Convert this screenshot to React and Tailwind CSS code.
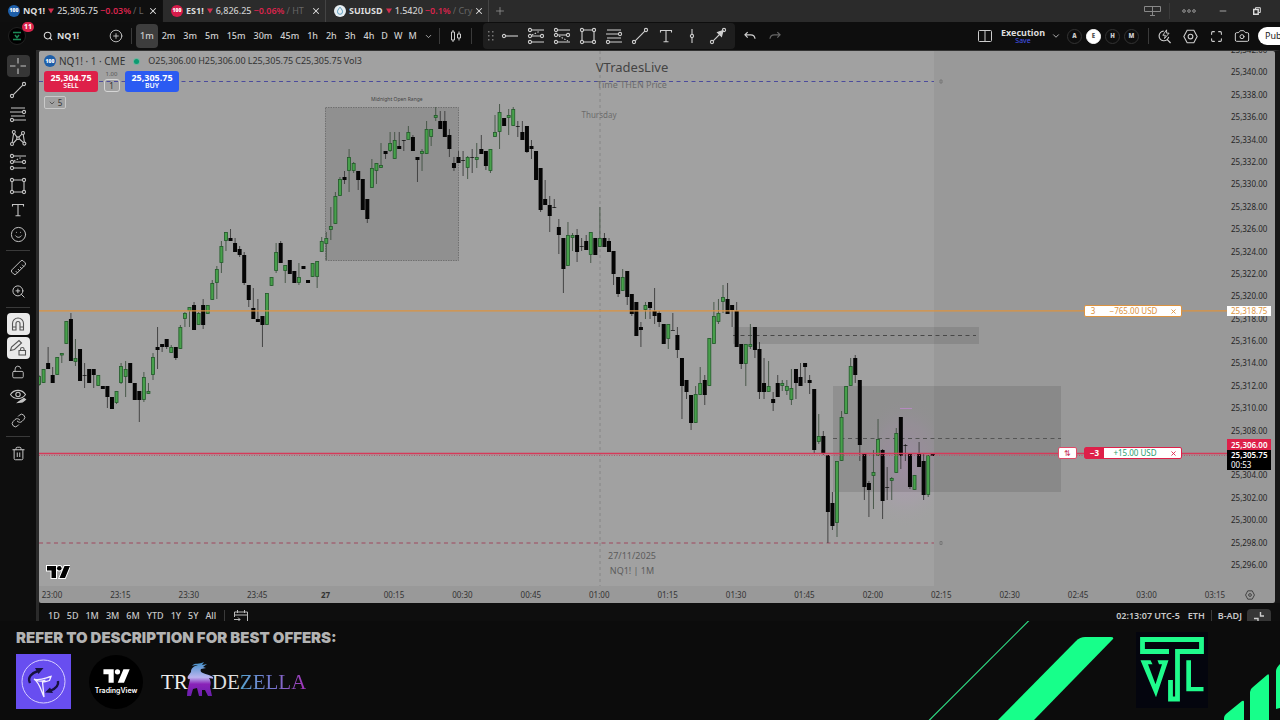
import React from "react";
import { Search, CirclePlus, Plus, X, ChevronDown, Camera, Smile, Ruler, ZoomIn, LockOpen, Link, Trash2, Maximize, Minus } from "lucide-react";

/* One entry per minute: [high, body top, body bottom, low, 1 = up / 0 = down] */
const CANDLES = [
  [375,376,385,386,1],[369,369,383,383,1],[347,363,369,369,0],[367,375,383,383,0],[357,357,375,375,1],[353,353,355,363,1],
  [321,321,344,344,1],[313,319,361,361,0],[339,358,362,366,1],[349,349,381,381,0],[363,375,375,388,0],[369,369,383,383,0],
  [369,369,375,388,0],[375,375,386,386,1],[386,386,389,389,0],[386,386,397,408,0],[397,397,409,409,0],[391,391,403,404,1],
  [363,366,383,384,1],[361,369,377,397,1],[363,363,383,383,0],[383,383,400,400,0],[391,391,400,422,0],[372,377,400,402,1],
  [383,391,394,394,1],[353,357,375,380,1],[327,347,350,369,0],[344,344,347,352,0],[339,339,347,349,0],[345,347,353,353,1],
  [347,347,358,360,0],[325,327,349,349,1],[312,313,319,327,1],[307,307,311,327,1],[302,305,330,330,0],[312,313,325,325,1],
  [299,305,325,329,0],[305,305,314,314,1],[280,283,300,300,1],[266,269,283,299,1],[241,246,263,273,1],[232,232,241,251,1],
  [229,238,241,241,0],[238,243,252,252,0],[246,249,255,257,0],[252,255,283,285,0],[285,285,300,307,0],[288,308,319,319,0],
  [299,319,322,322,0],[316,316,325,347,0],[293,293,325,325,1],[277,277,286,286,1],[243,252,271,273,1],[241,243,263,263,0],
  [265,265,271,283,1],[260,260,274,274,0],[271,271,283,283,0],[263,277,283,285,1],[266,266,269,269,0],[280,280,283,283,0],
  [263,263,277,277,1],[261,261,277,288,1],[237,241,252,252,1],[232,238,244,260,1],[207,226,230,240,1],[192,196,224,224,1],
  [177,179,196,196,1],[171,177,180,184,0],[149,157,171,192,1],[162,163,171,173,1],[171,171,180,190,0],[179,179,210,210,0],
  [199,199,219,223,0],[159,168,188,188,1],[163,163,171,184,1],[143,165,168,168,1],[151,151,154,159,0],[132,143,151,152,1],
  [132,140,159,159,1],[132,146,149,149,0],[140,140,140,151,0],[126,132,140,140,1],[135,137,151,151,0],[157,157,160,182,0],
  [149,151,154,171,1],[121,129,154,154,1],[129,129,137,146,1],[107,115,118,121,1],[111,121,129,129,0],[111,121,137,137,0],
  [129,135,149,157,0],[157,163,168,171,0],[151,157,163,163,0],[151,160,160,176,0],[156,157,168,179,1],[149,157,157,173,0],
  [143,157,160,168,1],[135,149,154,154,0],[151,151,166,170,0],[149,149,171,173,1],[115,132,137,137,1],[104,112,132,149,1],
  [118,118,126,126,0],[109,115,118,135,1],[107,109,126,126,1],[121,126,126,137,0],[121,132,140,140,0],[126,126,152,153,0],
  [140,146,149,159,0],[151,151,180,180,0],[168,168,210,212,0],[180,199,205,205,0],[196,205,216,232,0],[199,207,207,208,0],
  [219,227,235,254,0],[238,238,269,293,0],[222,235,266,266,1],[233,235,238,251,1],[229,235,252,262,0],[238,246,246,251,0],
  [235,241,250,250,0],[232,232,255,263,1],[238,238,255,255,0],[207,238,247,247,1],[233,238,247,247,0],[238,241,252,252,0],
  [251,251,274,285,0],[277,277,294,297,0],[269,277,291,291,1],[271,271,297,305,0],[294,294,314,316,0],[302,302,336,336,0],
  [322,327,330,347,0],[302,305,310,319,1],[302,302,308,319,0],[288,311,316,324,0],[311,313,322,327,0],[324,324,344,344,0],
  [324,324,339,349,1],[313,330,330,330,0],[327,335,350,358,0],[358,358,386,419,0],[380,380,392,399,0],[395,395,423,430,0],
  [386,394,423,423,1],[367,383,395,395,1],[375,380,395,405,0],[338,338,386,386,1],[302,316,344,344,1],[299,313,322,324,1],
  [285,297,302,313,1],[283,299,314,314,0],[305,305,310,327,0],[302,311,347,347,0],[344,344,364,369,0],[344,344,364,386,1],
  [324,344,347,349,1],[327,327,350,358,0],[342,349,392,399,0],[358,383,392,399,0],[361,386,392,392,1],[392,399,403,411,0],
  [375,383,397,397,0],[380,383,386,391,1],[380,386,391,395,1],[369,388,400,405,1],[369,369,383,399,0],[363,377,386,386,0],
  [363,363,367,383,0],[375,380,383,394,0],[389,389,450,453,0],[414,436,442,444,1],[431,436,453,455,0],[455,455,512,543,0],
  [492,503,526,530,0],[461,461,523,537,1],[411,417,461,461,1],[386,386,414,414,1],[358,366,386,386,1],[355,358,375,383,0],
  [380,380,445,461,0],[453,453,487,500,0],[481,483,490,517,0],[450,472,476,509,1],[419,439,456,456,1],[449,450,501,519,0],
  [467,487,487,500,0],[477,478,481,500,1],[428,433,473,473,1],[417,417,456,469,0],[444,445,445,461,0],[453,453,487,489,0],
  [475,475,490,490,1],[442,453,467,467,0],[453,461,495,500,0],[455,455,495,497,1],[453,453,456,456,0],
];

const PRICES = Array.from({ length: 24 }, (_, i) => 342 - i * 2);
const TIMES = ["23:00","23:15","23:30","23:45","27","00:15","00:30","00:45","01:00","01:15","01:30","01:45","02:00","02:15","02:30","02:45","03:00","03:15"];
const INTERVALS = ["1m","2m","3m","5m","15m","30m","45m","1h","2h","3h","4h","D","W","M"];
const RANGES = ["1D","5D","1M","3M","6M","YTD","1Y","5Y","All"];

function Glyph({ children, className = "size-[18px]" }) {
  return (
    <svg viewBox="0 0 18 18" fill="none" stroke="currentColor" strokeWidth="1.1" className={className} aria-hidden="true">
      {children}
    </svg>
  );
}

const TrendIcon = () => (
  <Glyph><path d="M4.2 13.8 13.8 4.2" /><circle cx="3" cy="15" r="1.6" /><circle cx="15" cy="3" r="1.6" /></Glyph>
);
const FibIcon = () => (
  <Glyph><path d="M2 3h14M1 7h12.4M2 11h14M4.6 15H17" /><circle cx="15" cy="7" r="1.6" /><circle cx="3" cy="15" r="1.6" /></Glyph>
);
const PatternIcon = () => (
  <Glyph>
    <path d="M3.2 13.4 4.6 4.6M5.2 4.4l3 4M9.8 8.2l3.2-3M14.2 5.4l1.2 7.8M4.4 14 8 10.2M14.4 13.6l-4-3.6" />
    <circle cx="3" cy="15" r="1.5" /><circle cx="4.8" cy="3" r="1.5" /><circle cx="9" cy="9.2" r="1.3" /><circle cx="14" cy="4" r="1.5" /><circle cx="15.4" cy="14.6" r="1.5" />
  </Glyph>
);
const LongIcon = () => (
  <Glyph>
    <path d="M4.6 3H17M4.6 9h8.8M4.6 15H17" /><path d="m5 8 8-4" strokeDasharray="1.5 1.5" />
    <circle cx="3" cy="3" r="1.6" /><circle cx="3" cy="9" r="1.6" /><circle cx="15" cy="9" r="1.6" /><circle cx="3" cy="15" r="1.6" />
  </Glyph>
);
const ShortIcon = () => (
  <Glyph>
    <path d="M4.6 3H17M4.6 8h8.8M4.6 15H17" /><path d="m6 9 9 5" strokeDasharray="1.5 1.5" />
    <circle cx="3" cy="3" r="1.6" /><circle cx="3" cy="8" r="1.6" /><circle cx="15" cy="8" r="1.6" /><circle cx="3" cy="15" r="1.6" />
  </Glyph>
);
const RectIcon = () => (
  <Glyph>
    <path d="M4.6 3h8.8M4.6 15h8.8M3 4.6v8.8M15 4.6v8.8" />
    <circle cx="3" cy="3" r="1.6" /><circle cx="15" cy="3" r="1.6" /><circle cx="3" cy="15" r="1.6" /><circle cx="15" cy="15" r="1.6" />
  </Glyph>
);
const TextIcon = () => <Glyph><path d="M3.5 5.5V3.5h11v2M9 3.5v11M6.5 14.8h5" /></Glyph>;
const HLineIcon = () => <Glyph><circle cx="3" cy="9" r="1.6" /><path d="M4.6 9H17" /></Glyph>;
const VLineIcon = () => <Glyph><circle cx="9" cy="9" r="1.6" /><path d="M9 2v5.4M9 10.6V16" /></Glyph>;
const ArrowToolIcon = () => (
  <Glyph><path d="M4.2 13.8 14 4" /><path d="m14 3.5-5.5 2 4 4z" fill="currentColor" /><circle cx="3" cy="15" r="1.6" /><circle cx="15" cy="3" r="1.6" /></Glyph>
);
const CrossIcon = () => <Glyph><path d="M9 1v5.5M9 11.5V17M1 9h5.5M11.5 9H17" /></Glyph>;
const MagnetIcon = () => (
  <Glyph><path d="M3.5 15V8.5a5.5 5.5 0 0 1 11 0V15H11V8.5a2 2 0 0 0-4 0V15zM3.5 12H7M11 12h3.5" /></Glyph>
);
const PencilLockIcon = () => (
  <Glyph><path d="m1.5 11.5 1-3.5L10 1.500 12.500 4 5.500 10.500zM10 14.500v-3h6.500v4.500H10zM11.500 11.500v-1.200a1.800 1.800 0 0 1 3.600 0v1.200" /></Glyph>
);
const EyeIcon = () => (
  <Glyph><path d="M1.5 7.5C5 2 13 2 16.5 7.5 15 10 12.5 11.5 9 11.500S3 10 1.500 7.500z" /><circle cx="9" cy="7.5" r="2.2" /><path d="m9 15.5 2-1.5 4-2.5 1.500 1-3 2.500z" fill="currentColor" /></Glyph>
);

function Symbol100({ tone }) {
  return (
    <span className={`flex size-3 shrink-0 items-center justify-center rounded-full text-[5px] font-black text-white ${tone}`}>100</span>
  );
}

function Tab({ icon, name, price, change, tail, active }) {
  return (
    <div className={`flex w-[163px] shrink-0 items-center border-r pr-1 pl-2 ${active ? "border-[#111] bg-[#0f0f0f]" : "border-[#444]"}`}>
      {icon}
      <span className="ml-[3px] font-bold text-[#ddd]">{name}</span>
      <svg viewBox="0 0 6 6" className="mx-[3px] size-[6px] shrink-0 fill-[#d32f4f]" aria-hidden="true"><path d="M0 .5h6L3 5.5z" /></svg>
      <span className="font-medium text-[#ccc]">{price}</span>
      <span className="ml-[2px] font-semibold text-[#d8244c]">{change}</span>
      <span className="ml-[2px] flex-1 overflow-hidden whitespace-nowrap text-[#666]">{tail}</span>
      <button aria-label={`Close ${name}`} className="text-[#e0e0e0]"><X size={10} strokeWidth={2.5} /></button>
    </div>
  );
}

const Divider = ({ className = "" }) => <span className={`w-px shrink-0 bg-[#3a3a3a] ${className}`} />;

function TopTabs() {
  return (
    <header className="flex h-[22px] shrink-0 items-stretch bg-[#2b2b2b] text-[9px]">
      <Tab active icon={<Symbol100 tone="bg-[#1d5ea8]" />} name="NQ1!" price="25,305.75" change="−0.03%" tail="/ L" />
      <Tab icon={<Symbol100 tone="bg-[#d81b4a]" />} name="ES1!" price="6,826.25" change="−0.06%" tail="/ HT" />
      <Tab
        icon={
          <svg viewBox="0 0 12 12" className="size-3 shrink-0" aria-hidden="true">
            <circle cx="6" cy="6" r="6" fill="#e6eef2" /><path d="M6 2.2c2 2.5 2.5 3.3 2.5 4.6a2.500 2.500 0 0 1-5 0C3.500 5.500 4 4.700 6 2.200z" fill="none" stroke="#5f9fc0" strokeWidth="1" />
          </svg>
        }
        name="SUIUSD" price="1.5420" change="−0.1%" tail="/ Cry"
      />
      <button aria-label="New tab" className="px-[5px] text-[#999]"><Plus size={12} strokeWidth={1.5} /></button>
      <div className="ml-auto flex items-center text-[#bbb]">
        <button aria-label="Tab layout">
          <svg viewBox="0 0 17 12" className="h-3 w-[17px] fill-none stroke-[#888]" aria-hidden="true"><path d="M.5 1.5h16v5H.5zM8.500 1.500V10M6 10.500h5" /></svg>
        </button>
        <Divider className="mr-[9px] ml-2 h-4" />
        <button aria-label="More" className="px-[3px]">
          <svg viewBox="0 0 14 4" className="h-1 w-[14px] fill-none stroke-[#999]" aria-hidden="true"><circle cx="2" cy="2" r="1.3" /><circle cx="7" cy="2" r="1.3" /><circle cx="12" cy="2" r="1.3" /></svg>
        </button>
        <button aria-label="Minimize" className="ml-[15px] px-1"><Minus size={10} /></button>
        <button aria-label="Restore" className="mr-[19px] ml-[21px]">
          <svg viewBox="0 0 8 8" className="size-2 fill-none stroke-[#ddd]" aria-hidden="true"><path d="M.7 2.5h4.500v4.800H.7z" strokeWidth="1.4" /><path d="M2.500 2V.7h4.800v4.800H6" /></svg>
        </button>
      </div>
    </header>
  );
}

function TopToolbar() {
  return (
    <div className="flex h-7 shrink-0 items-center overflow-hidden bg-[#0e0e0e] text-[9px] text-[#cfcfcf]">
      <button aria-label="Account, 11 notifications" className="relative ml-2 flex size-[18px] items-center justify-center rounded-full border border-[#222] bg-black">
        <svg viewBox="0 0 10 10" className="size-[10px] fill-none stroke-[#1c8a57] stroke-[1.5]" aria-hidden="true"><path d="M1 1.5h8M3 4l2 2.500L7 4M1 8.500h8" /></svg>
        <span className="absolute -top-[6px] left-[13px] rounded-full bg-[#d8244c] px-[2px] text-[7px] leading-[10px] font-bold text-white">11</span>
      </button>
      <button className="ml-[17px] flex w-[62px] items-center gap-1 font-bold text-[#ddd]"><Search size={10} strokeWidth={2.5} />NQ1!</button>
      <button aria-label="Compare" className="ml-1"><CirclePlus size={14} strokeWidth={1.5} /></button>
      <Divider className="mr-1 ml-2 h-4" />
      <div className="flex items-center">
        {INTERVALS.map((t, i) => (
          <button key={t} className={`font-medium ${t.length === 1 ? "px-[3px]" : "px-1"} ${i === 0 ? "rounded-sm bg-[#3d3d3d] py-[5px]" : ""}`}>{t}</button>
        ))}
      </div>
      <button aria-label="More intervals" className="ml-1"><ChevronDown size={9} /></button>
      <Divider className="mx-[6px] h-4" />
      <button aria-label="Chart style" className="w-5">
        <svg viewBox="0 0 12 14" className="mx-auto h-[14px] w-3 fill-none stroke-[#ccc]" aria-hidden="true"><path d="M1.5 3h3v8h-3zM3 1v2M3 11v2M7.500 5h3v4h-3zM9 2.500V5M9 9v2.500" /></svg>
      </button>
      <Divider className="mr-[11px] ml-[5px] h-4" />
      <div className="flex h-[26px] shrink-0 items-center rounded bg-[#1e1e1e] pr-[4px] pl-[5px]">
        <svg viewBox="0 0 6 10" className="mr-[3px] h-[10px] w-[6px] fill-[#777]" aria-hidden="true"><path d="M0 0h1.500v1.500H0zM4 0h1.500v1.500H4zM0 4h1.500v1.500H0zM4 4h1.500v1.500H4zM0 8h1.500v1.500H0zM4 8h1.500v1.500H4z" /></svg>
        {[["Horizontal ray",HLineIcon],["Long position",LongIcon],["Short position",ShortIcon],["Rectangle",RectIcon],["Fib retracement",FibIcon],["Trend line",TrendIcon],["Text",TextIcon],["Vertical line",VLineIcon],["Arrow",ArrowToolIcon]].map(([label, I]) => (
          <button key={label} aria-label={label} className="flex w-[26px] justify-center"><I /></button>
        ))}
      </div>
      <button aria-label="Undo" className="ml-2"><Glyph className="size-[14px]"><path d="M6 4 2.5 7.500 6 11M3 7.500h7c3 0 5 1.500 5.500 5" strokeWidth="1.5" /></Glyph></button>
      <button aria-label="Redo" className="ml-[11px] text-[#666]"><Glyph className="size-[14px]"><path d="m12 4 3.5 3.500L12 11M15 7.500H8c-3 0-5 1.500-5.500 5" strokeWidth="1.5" /></Glyph></button>
      <div className="ml-auto flex items-center">
        <button aria-label="Layout setup"><svg viewBox="0 0 14 12" className="h-3 w-[14px] fill-none stroke-[#ccc]" aria-hidden="true"><rect x=".5" y=".5" width="13" height="11" rx="1" /><path d="M7 .5v11" /></svg></button>
        <button className="ml-[9px] text-[9px] leading-[9px] font-bold text-[#ddd]">Execution<span className="block text-[7px] leading-[7px] font-normal text-[#4456f0]">Save</span></button>
        <button aria-label="Layouts" className="ml-[6px]"><ChevronDown size={10} /></button>
        <div className="ml-[6px] flex gap-1">
          {["A","E","H","M"].map((c) => (
            <button key={c} className={`size-[15px] rounded-full border text-[6px] leading-[13px] font-black ${c === "E" ? "border-white bg-white text-[#555]" : "border-[#333] text-[#ccc]"}`}>{c}</button>
          ))}
        </div>
        <Divider className="mr-2 ml-[9px] h-4" />
        <button aria-label="Quick search"><Glyph className="size-[15px]"><path d="M8 2.5a5.800 5.800 0 1 0 6 7M12.300 12.800l4 4" strokeWidth="1.4" /><path d="M11.500 1 7 7.500h3L9 11.500l5.500-6.500h-3z" /></Glyph></button>
        <button aria-label="Settings" className="ml-[11px]"><Glyph className="size-[15px]"><path d="M5 1.5h8L17 9l-4 7.500H5L1 9z" strokeWidth="1.3" /><circle cx="9" cy="9" r="2.8" strokeWidth="1.3" /></Glyph></button>
        <button aria-label="Fullscreen" className="ml-[12px]"><Maximize size={13} strokeWidth={2} /></button>
        <button aria-label="Snapshot" className="ml-[11px]"><Camera size={16} strokeWidth={1.5} /></button>
        <button className="-mr-4 ml-[8px] w-[38px] rounded-full bg-white py-[3px] pl-[7px] text-left text-[9px] leading-3 text-[#222]">Publish</button>
      </div>
    </div>
  );
}

function SideTools() {
  const groups = [
    [["Crosshair",CrossIcon,"bg-[#363636]"],["Trend line",TrendIcon],["Fib retracement",FibIcon],["Patterns",PatternIcon],["Forecasting",LongIcon],["Shapes",RectIcon],["Text",TextIcon],["Emoji",() => <Smile size={17} strokeWidth={1.4} />]],
    [["Measure",() => <Ruler size={17} strokeWidth={1.4} className="rotate-90" />],["Zoom in",() => <ZoomIn size={15} strokeWidth={1.6} />]],
    [["Magnet",MagnetIcon,"bg-[#e9e9e9] text-[#555]"],["Stay in drawing mode",PencilLockIcon,"bg-[#e9e9e9] text-[#555]"],["Lock drawings",() => <LockOpen size={14} strokeWidth={1.6} />],["Hide drawings",EyeIcon],["Link",() => <Link size={15} strokeWidth={1.6} />]],
    [["Remove objects",() => <Trash2 size={15} strokeWidth={1.6} />]],
  ];
  return (
    <nav className="flex w-9 shrink-0 flex-col items-center bg-[#0e0e0e] pt-1 text-[#c4c4c4]">
      {groups.map((g, n) => (
        <React.Fragment key={n}>
          {n > 0 && <span className="my-1 h-px w-6 shrink-0 bg-[#3a3a3a]" />}
          {g.map(([label, I, tone = ""]) => (
            <button key={label} aria-label={label} className="flex h-6 w-6 shrink-0 items-center justify-center">
              <span className={`flex h-[22px] w-[23px] shrink-0 items-center justify-center rounded ${tone}`}><I /></span>
            </button>
          ))}
        </React.Fragment>
      ))}
    </nav>
  );
}

function CandleDrawing() {
  return (
    <svg viewBox="39 51 1236 552" width="1236" height="552" className="absolute top-0 left-0 max-w-none" role="img" aria-label="NQ1! one minute candles">
      <defs><radialGradient id="glow"><stop offset="0" stopColor="#b09bb4" /><stop offset=".6" stopColor="#a89fab" stopOpacity=".6" /><stop offset="1" stopColor="#a1a1a1" stopOpacity="0" /></radialGradient></defs>
      <rect x="39" y="51" width="895" height="535" fill="#a1a1a1" />
      <ellipse cx="905" cy="462" rx="48" ry="66" fill="url(#glow)" />
      <rect x="934" y="380" width="30" height="150" fill="#999" />
      <rect x="325.5" y="107.5" width="133" height="153" fill="#000" fillOpacity=".1" stroke="#666" strokeWidth=".8" strokeDasharray="1.5 1" />
      <rect x="733" y="327" width="246" height="17" fill="#000" fillOpacity=".1" />
      <rect x="833" y="386" width="228" height="106" fill="#000" fillOpacity=".1" />
      <g fill="none" strokeWidth="1">
        <path d="M733 335.5h243" stroke="#484848" strokeDasharray="4 3.5" />
        <path d="M833 438.5h228" stroke="#555" strokeDasharray="4 3.5" />
        <path d="M39 81.5h895" stroke="#4c4c9c" strokeDasharray="4 3.5" />
        <path d="M39 543h895" stroke="#a0485f" strokeDasharray="4 3.5" strokeWidth="1.2" />
        <path d="M600 51v535" stroke="#868686" strokeDasharray="3 3" />
        <path d="M900 408.5h12" stroke="#b58ac0" />
        <path d="M940 80h2v3h-2zM940 541.5h2v3h-2z" stroke="#777" />
      </g>
      {CANDLES.map(([h, t, b, l, up], i) => {
        const x = 39 + i * 4.56;
        return (
          <g key={i}>
            <path d={`M${x} ${h}V${l}`} stroke={up ? "#3f5041" : "#3a3a3a"} strokeWidth=".9" />
            {up ? (
              <rect x={x - 1.5} y={t + 0.5} width="3" height={Math.max(b - t - 1, 1.5)} fill="#47a04b" stroke="#22592a" strokeWidth=".8" />
            ) : (
              <rect x={x - 2} y={t} width="4" height={Math.max(b - t, 0.7)} fill="#050505" />
            )}
          </g>
        );
      })}
      <path d="M39 310.8h1188" stroke="#dc9340" strokeWidth="1.3" />
      <path d="M39 453.5h1188" stroke="#d63a5a" strokeWidth="1.3" />
      <path d="M39 455.5h1188" stroke="#b5566b" strokeDasharray="1 1.5" />
    </svg>
  );
}

function TvMark({ className }) {
  return (
    <svg viewBox="-1 -1 24 14" className={className} aria-hidden="true">
      <path d="M0 0h9v12H4.5V4.500H0zM17.500 0H23l-5 12h-5.500z" /><circle cx="12.3" cy="2.3" r="2.3" />
    </svg>
  );
}

function ChartLegend() {
  return (
    <div className="absolute top-1 left-[5px] text-[#333]">
      <div className="flex h-3 items-center text-[10px] leading-3">
        <Symbol100 tone="bg-[#1d5ea8]" />
        <span className="ml-[3px]">NQ1! · 1 · CME</span>
        <span className="ml-[9px] size-[5px] rounded-full bg-[#0c9b72] ring-1 ring-[#6fb49d]" />
        <span className="ml-[9px] flex gap-[2px] text-[9px]">
          <span>O25,306.00</span><span>H25,306.00</span><span>L25,305.75</span><span>C25,305.75</span><span>Vol3</span>
        </span>
      </div>
      <div className="mt-1 flex h-[21px]">
        <button className="flex w-[54px] flex-col items-center justify-center rounded-[3px] bg-[#de2049] text-[9px] leading-[9px] font-bold text-white">25,304.75<span className="text-[7px] leading-[8px] font-semibold">SELL</span></button>
        <div className="flex w-[27px] flex-col items-center justify-between">
          <label htmlFor="qty" className="text-[6px] leading-[7px] text-[#555]">1.00</label>
          <input id="qty" defaultValue="1" className="h-[13px] w-4 rounded-[3px] border border-[#d5d5d5] bg-transparent text-center text-[8px]" />
        </div>
        <button className="flex w-[54px] flex-col items-center justify-center rounded-[3px] bg-[#2b5bf2] text-[9px] leading-[9px] font-bold text-white">25,305.75<span className="text-[7px] leading-[8px] font-semibold">BUY</span></button>
      </div>
      <button className="mt-1 flex h-[13px] w-[22px] items-center justify-center gap-[2px] rounded-[2px] border border-[#c9c9c9] text-[8px]"><ChevronDown size={8} />5</button>
    </div>
  );
}

function Chart() {
  return (
    <main className="relative flex min-w-0 flex-1 flex-col overflow-hidden rounded-[2px] bg-[#999]">
      <CandleDrawing />
      <div className="flex min-h-0 flex-1">
        <section className="relative flex-1">
          <ChartLegend />
          <p className="absolute top-11 left-[332px] text-[5px] leading-2 text-[#444]">Midnight Open Range</p>
          <div className="absolute top-2 left-[513px] w-40 text-center">
            <h1 className="text-[13px] leading-4 text-[#444]">VTradesLive</h1>
            <p className="mt-1 text-[9px] leading-3 text-[#6c6c6c]">Time THEN Price</p>
          </div>
          <p className="absolute top-[58px] left-[530px] w-[60px] text-center text-[8px] leading-3 text-[#6c6c6c]">Thursday</p>
          <div className="absolute top-[497px] left-[513px] w-40 text-center text-[9px] leading-[15px] text-[#5c5c5c]">
            <p>27/11/2025</p><p>NQ1! | 1M</p>
          </div>
          <TvMark className="absolute top-[514px] left-[7px] h-[14px] w-6 fill-black stroke-white stroke-2 [paint-order:stroke]" />
          <div className="absolute top-[254px] left-[1045px] flex h-3 w-[98px] items-center rounded-[2px] border border-[#dc9340] bg-white text-[8px] leading-[10px] text-[#dc9340]">
            <span className="w-4 text-center">3</span><span className="flex-1 text-center">−765.00 USD</span>
            <button aria-label="Cancel order" className="px-1"><X size={7} strokeWidth={3} /></button>
          </div>
          <button aria-label="Reverse position" className="absolute top-[396px] left-[1019px] h-3 w-[19px] rounded-[2px] border border-[#de4a68] bg-white text-[8px] leading-[10px] text-[#c8365a]">⇅</button>
          <div className="absolute top-[396px] left-[1045px] flex h-3 w-[98px] items-stretch rounded-[2px] border border-[#de2049] bg-white text-[8px] leading-[10px]">
            <span className="w-[19px] bg-[#de2049] text-center font-bold text-white">−3</span><span className="flex-1 text-center text-[#2b9a6e]">+15.00 USD</span>
            <button aria-label="Close position" className="px-1 text-[#de2049]"><X size={7} strokeWidth={3} /></button>
          </div>
        </section>
        <aside className="relative w-12 shrink-0 overflow-hidden text-[8px] text-[#262626]">
          <div className="-mt-[7px] flex h-[527px] flex-col justify-between pl-1">
            {PRICES.map((p) => <span key={p} className="h-3 leading-3">{p === 306 ? "" : `25,${p}.00`}</span>)}
          </div>
          <span className="absolute top-[255px] left-0 w-11 bg-white pl-1 leading-[10px] text-[#dc9340]">25,318.75</span>
          <span className="absolute top-[388px] left-0 flex w-11 flex-col font-semibold text-white">
            <span className="bg-[#de2049] pl-1 leading-[11px]">25,306.00</span>
            <span className="bg-black pl-1 leading-[10px]">25,305.75</span>
            <span className="bg-black pl-1 leading-[10px] font-normal">00:53</span>
          </span>
        </aside>
      </div>
      <div className="relative flex h-[17px] shrink-0 items-center text-[8px] text-[#333]">
        <div className="-ml-1 flex flex-1 justify-between">
          {TIMES.map((t) => <span key={t} className={`w-[34px] text-center ${t === "27" ? "font-bold" : ""}`}>{t}</span>)}
        </div>
        <button aria-label="Time settings" className="flex w-[43px] justify-center pr-[7px]"><Glyph className="size-[10px]"><path d="M5 1.5h8L17 9l-4 7.500H5L1 9z" strokeWidth="1.5" /><circle cx="9" cy="9" r="2.5" strokeWidth="1.5" /></Glyph></button>
      </div>
    </main>
  );
}

function RangeBar() {
  return (
    <div className="flex h-[18px] shrink-0 bg-[#0e0e0e] text-[9px] text-[#c8c8c8]">
      <span className="ml-9 w-[3px] bg-[#2b2b2b]" />
      <div className="flex flex-1 items-center pt-2 pr-[9px] pl-[5px] leading-[10px] font-semibold">
        {RANGES.map((r) => <button key={r} className="pr-[3px] pl-1 font-medium">{r}</button>)}
        <Divider className="mr-[9px] ml-[5px] h-3" />
        <button aria-label="Go to date"><svg viewBox="0 0 14 12" className="h-3 w-[14px] fill-none stroke-[#bbb]" aria-hidden="true"><path d="M.5 7V2h13v9.500H9M.5 5h13M3.500 0v3M10.500 0v3M0 9.500h6M4 7.500l2 2-2 2" /></svg></button>
        <button className="ml-auto">02:13:07 UTC-5</button>
        <button className="ml-2">ETH</button>
        <Divider className="mx-[6px] h-3" />
        <button>B-ADJ</button>
        <button aria-label="Collapse panel" className="-mt-1 -mb-1 ml-[5px] flex h-[15px] w-6 items-center justify-center rounded-t bg-[#363636]"><svg viewBox="0 0 12 12" className="size-3 fill-none stroke-[#ccc] stroke-[1.4]" aria-hidden="true"><path d="M7.5 2v4H11M1 8.500h4V12" /></svg></button>
      </div>
    </div>
  );
}

function Banner() {
  return (
    <footer className="flex h-[99px] shrink-0 justify-between overflow-hidden bg-[#0c0c0c] pl-4">
      <div>
        <h2 className="mt-2 font-[Inter,sans-serif] text-[15px] leading-[18px] font-black text-[#b3b3b3]">REFER TO DESCRIPTION FOR BEST OFFERS:</h2>
        <div className="mt-[7px] flex items-center">
          <svg viewBox="0 0 55 55" className="size-[55px]" role="img" aria-label="Partner logo">
            <path d="M0 0h55v55H0z" fill="#684ef0" />
            <circle cx="27.5" cy="27.5" r="21.5" fill="none" stroke="#d8d0ff" strokeWidth="1" />
            <path d="M14 29c-3-6 2-10 8-12" fill="none" stroke="#17123f" strokeWidth="2.4" /><path d="m19 14 8.500 0-5 6z" fill="#17123f" />
            <path d="M42 27c1 5-3 8-8 10" fill="none" stroke="#17123f" strokeWidth="2.4" /><path d="m34 33.500-5 5 8 .5z" fill="#17123f" />
            <path d="M18 25c6 2 11-1 17-2.500l-1.500 4c-3 1-6 1.500-7 1.500l1.500 15c-3-6-4-14-10-18zM20.500 26.500c3 1 6 1 9-.5" fill="none" stroke="#f4f0ff" strokeWidth="1.3" />
          </svg>
          <div className="ml-[18px] flex size-[54px] flex-col items-center justify-center rounded-full bg-black">
            <TvMark className="h-4 w-7 fill-white" />
            <span className="mt-[2px] font-[Inter,sans-serif] text-[7px] leading-[10px] font-semibold text-white">TradingView</span>
          </div>
          <div className="ml-[18px] flex items-center font-['Liberation_Serif',serif] text-[21px] leading-7" role="img" aria-label="TradeZella">
            <span className="text-[#eee]">TR</span>
            <svg viewBox="0 0 26 36" className="-mx-px -mt-[6px] h-9 w-[26px] shrink-0" aria-hidden="true">
              <defs><linearGradient id="beast" x1="0" y1="0" x2="0" y2="1"><stop offset="0" stopColor="#3f8fc8" /><stop offset=".45" stopColor="#b9b4ee" /><stop offset=".65" stopColor="#8a22b8" /><stop offset="1" stopColor="#6a1fae" /></linearGradient></defs>
              <path d="M17 1c-5 3-9 0-12 4 2-1 4-1 6-1-4 1-7 3-7 7l-3 4c-1 2 0 4 2 3-1 6-3 11-3 17h4l2-7 4-1 2 8h3l0-6h3l3 6h4l-2-9c1-3 1-6-1-9l6 1c-3-4-8-4-12-6-2-1-3-2-2-4l5-1-3-1 4-3-5 1z" fill="url(#beast)" />
            </svg>
            <span className="text-[#ddd]">DE</span>
            <span className="bg-linear-to-r from-[#55a3cf] via-[#7575d0] to-[#a02fb8] bg-clip-text text-transparent">ZELLA</span>
          </div>
        </div>
      </div>
      <svg viewBox="920 620 360 100" className="-mt-px h-[100px] w-[360px] shrink-0" role="img" aria-label="VTL">
        <path d="M1029 620.5 929 720.5" stroke="#2fdc85" strokeWidth="1.2" />
        <path d="M998 720 1076 641q4-4 9-4h26q3 0 2 2l-79 81z" fill="#17ff8a" />
        <path d="M1136 632h72v76h-72z" fill="#04050e" />
        <path d="M1169 651.500h-26.500v-12h59v12H1177.500v47.500h-7v-19" fill="none" stroke="#1ffb8c" strokeWidth="4.8" />
        <path d="M1140.500 660.300h10l2 4h-4.500l7.500 20 6.500-20h-3l-1.500-4h11l-12.500 37z" fill="#1ffb8c" />
        <path d="M1186.300 660.300h4.700v26.700h12.500v4.300h-17.200z" fill="#1ffb8c" />
        <path d="M1224 720v-2q0-2 2-4l16-13q2-1 2 1v18zM1250 720v-28q0-3 3-5l14-12q2-2 2 1v44zM1276 709v-38q0-3 4-7v44z" fill="#17ff8a" />
      </svg>
    </footer>
  );
}

export default function App() {
  return (
    <div className="flex min-h-screen flex-col overflow-hidden bg-[#0e0e0e] font-['Noto_Sans',sans-serif]">
      <TopTabs />
      <TopToolbar />
      <div className="flex min-h-[553px] flex-1">
        <SideTools />
        <div className="flex min-w-0 flex-1 border-t border-r-[5px] border-l-[3px] border-t-[#333] border-r-[#161616] border-l-[#2b2b2b]">
          <Chart />
        </div>
      </div>
      <RangeBar />
      <Banner />
    </div>
  );
}
